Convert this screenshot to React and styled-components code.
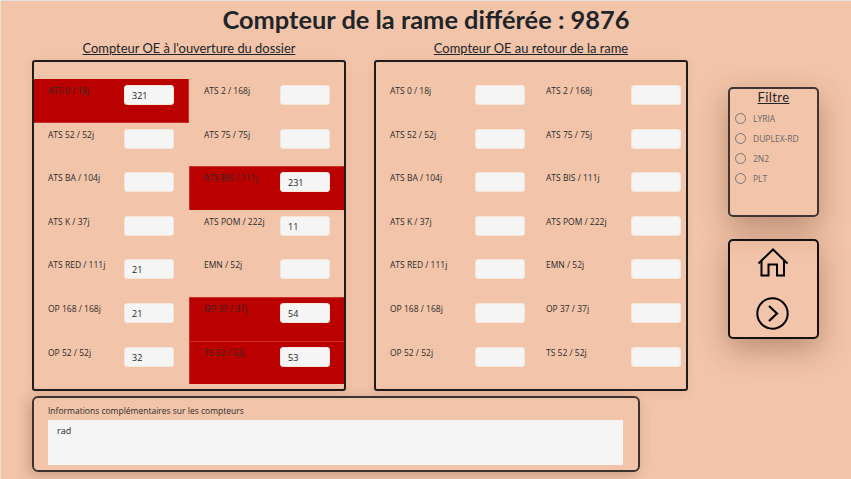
import React from "react";
import styled, { createGlobalStyle } from "styled-components";

const GlobalStyle = createGlobalStyle`
  html, body {
    margin: 0;
    padding: 0;
    background: #f2c4a9;
  }
  * {
    box-sizing: border-box;
  }
`;

const Page = styled.div`
  width: 851px;
  height: 479px;
  overflow: hidden;
  border-top: 1px solid #e2e2e2;
  border-left: 1px solid #efe0d6;
  background: #f2c4a9;
  font-family: "Open Sans", "Noto Sans", sans-serif;
  color: #2b2b2b;
`;

const Title = styled.h1`
  margin: 0;
  height: 39px;
  padding-top: 2px;
  text-align: center;
  font-family: Lato, sans-serif;
  font-weight: 700;
  font-size: 25.4px;
  line-height: 32px;
  color: #212529;
`;

const Body = styled.div`
  display: flex;
  align-items: flex-start;
  padding-left: 31px;
`;

const Main = styled.div`
  width: 657px;
`;

const Counters = styled.div`
  display: flex;
  gap: 28px;
`;

const Section = styled.section`
  width: 314px;
`;

const SectionTitle = styled.h2`
  margin: 0 0 3px;
  height: 17px;
  text-align: center;
  font-family: Lato, sans-serif;
  font-weight: 400;
  font-size: 12.9px;
  line-height: 17px;
  text-decoration: underline;
  color: #212529;
`;

const Panel = styled.div`
  height: 331px;
  border: 2px solid #1f1c1b;
  border-radius: 3px;
  padding-top: 17px;
  display: grid;
  grid-template-columns: 155px 155px;
  grid-auto-rows: 43.6px;
  box-shadow: 0 2px 10px rgba(90, 50, 30, 0.08);
`;

const Cell = styled.div`
  display: flex;
  align-items: flex-start;
  justify-content: space-between;
  padding: 6px ${(p) => (p.$right ? p.$inset : p.$inset + 1)}px 0 ${(p) => (p.$right ? "15px" : "14px")};
  background: ${(p) => (p.$alert ? "#bb0000" : "transparent")};
  box-shadow: ${(p) =>
    !p.$alert ? "none" : p.$right ? "inset 1px 1px 0 #c9322c" : "inset -1px -1px 0 #c9322c"};
`;

const Label = styled.label`
  font-size: 8.5px;
  line-height: 12px;
  white-space: nowrap;
`;

const CounterInput = styled.input`
  width: 50px;
  height: 20px;
  margin: 0;
  border: 1px solid #f7e6dc;
  border-radius: 3px;
  background: #f5f5f5;
  padding: 1px 7px 0;
  font-family: "Open Sans", sans-serif;
  font-size: 9px;
  color: #222;
  outline: none;
`;

const InfoPanel = styled.div`
  width: 608px;
  height: 76px;
  margin-top: 5px;
  padding: 8px 15px 0 14px;
  border: 2px solid #3b3330;
  border-radius: 6px;
  box-shadow: -3px 3px 14px rgba(90, 50, 30, 0.28);
`;

const InfoLabel = styled.label`
  display: block;
  height: 14px;
  font-size: 8.5px;
  line-height: 10px;
`;

const InfoText = styled.textarea`
  display: block;
  width: 575px;
  height: 45px;
  margin: 0;
  padding: 5px 9px;
  border: none;
  background: #f5f5f5;
  font-family: "Open Sans", sans-serif;
  font-size: 9px;
  line-height: 12px;
  color: #222;
  resize: none;
  outline: none;
`;

const Aside = styled.aside`
  display: flex;
  flex-direction: column;
  gap: 22px;
  margin-left: 39px;
  padding-top: 47px;
`;

const SideCard = styled.div`
  width: 91px;
  height: ${(p) => p.$h}px;
  border: 2px solid #3f3531;
  border-radius: 5px;
  box-shadow: 0 10px 30px rgba(90, 50, 30, 0.38);
`;

const FilterTitle = styled.div`
  padding-top: 1px;
  text-align: center;
  font-family: Lato, sans-serif;
  font-size: 13px;
  line-height: 15px;
  letter-spacing: 0.4px;
  text-decoration: underline;
  color: #212529;
  margin-bottom: 3px;
`;

const FilterRow = styled.label`
  display: flex;
  align-items: center;
  height: 20px;
  padding-left: 5px;
  font-size: 8.5px;
  color: #6b6866;
`;

const Radio = styled.span`
  width: 11px;
  height: 11px;
  margin-right: 7px;
  border: 1px solid #7d7673;
  border-radius: 50%;
`;

const NavCard = styled(SideCard)`
  display: flex;
  flex-direction: column;
  align-items: center;
  padding: 7px 2px 0 0;
  gap: 20px;
  border-color: #141110;
`;

const FILTERS = ["LYRIA", "DUPLEX-RD", "2N2", "PLT"];

const COUNTERS = [
  ["ATS 0 / 18j", "ATS 2 / 168j"],
  ["ATS 52 / 52j", "ATS 75 / 75j"],
  ["ATS BA / 104j", "ATS BIS / 111j"],
  ["ATS K / 37j", "ATS POM / 222j"],
  ["ATS RED / 111j", "EMN / 52j"],
  ["OP 168 / 168j", "OP 37 / 37j"],
  ["OP 52 / 52j", "TS 52 / 52j"],
].flat();

const OPENING = {
  "ATS 0 / 18j": { value: "321", alert: true },
  "ATS BIS / 111j": { value: "231", alert: true },
  "ATS POM / 222j": { value: "11" },
  "ATS RED / 111j": { value: "21" },
  "OP 168 / 168j": { value: "21" },
  "OP 37 / 37j": { value: "54", alert: true },
  "OP 52 / 52j": { value: "32" },
  "TS 52 / 52j": { value: "53", alert: true },
};

function CounterGrid({ values, inset }) {
  return (
    <Panel>
      {COUNTERS.map((name, i) => {
        const entry = values[name] || {};
        return (
          <Cell key={name} $alert={entry.alert} $right={i % 2 === 1} $inset={inset}>
            <Label>{name}</Label>
            <CounterInput readOnly value={entry.value || ""} />
          </Cell>
        );
      })}
    </Panel>
  );
}

const HomeIcon = () => (
  <svg width="30" height="29" viewBox="0 0 30 29" fill="none" stroke="#000" strokeWidth="2">
    <path d="M0.5 15.5 L15 1.5 L29.5 15.5" />
    <path d="M3.5 13 V27.5 H10.5 V16.5 H19 V27.5 H26 V13" />
  </svg>
);

const NextIcon = () => (
  <svg width="33" height="33" viewBox="0 0 33 33" fill="none" stroke="#000" strokeWidth="2">
    <circle cx="16.5" cy="16.5" r="15.2" />
    <path d="M13 9 L21 16.5 L13 24" strokeWidth="2.2" />
  </svg>
);

export default function App() {
  return (
    <Page>
      <GlobalStyle />
      <Title>Compteur de la rame différée : 9876</Title>
      <Body>
        <Main>
          <Counters>
            <Section>
              <SectionTitle>Compteur OE à l'ouverture du dossier</SectionTitle>
              <CounterGrid values={OPENING} inset={14} />
            </Section>
            <Section>
              <SectionTitle>Compteur OE au retour de la rame</SectionTitle>
              <CounterGrid values={{}} inset={5} />
            </Section>
          </Counters>
          <InfoPanel>
            <InfoLabel>Informations complémentaires sur les compteurs</InfoLabel>
            <InfoText readOnly value="rad" />
          </InfoPanel>
        </Main>
        <Aside>
          <SideCard $h={130}>
            <FilterTitle>Filtre</FilterTitle>
            {FILTERS.map((f) => (
              <FilterRow key={f}>
                <Radio />
                {f}
              </FilterRow>
            ))}
          </SideCard>
          <NavCard $h={100}>
            <HomeIcon />
            <NextIcon />
          </NavCard>
        </Aside>
      </Body>
    </Page>
  );
}
